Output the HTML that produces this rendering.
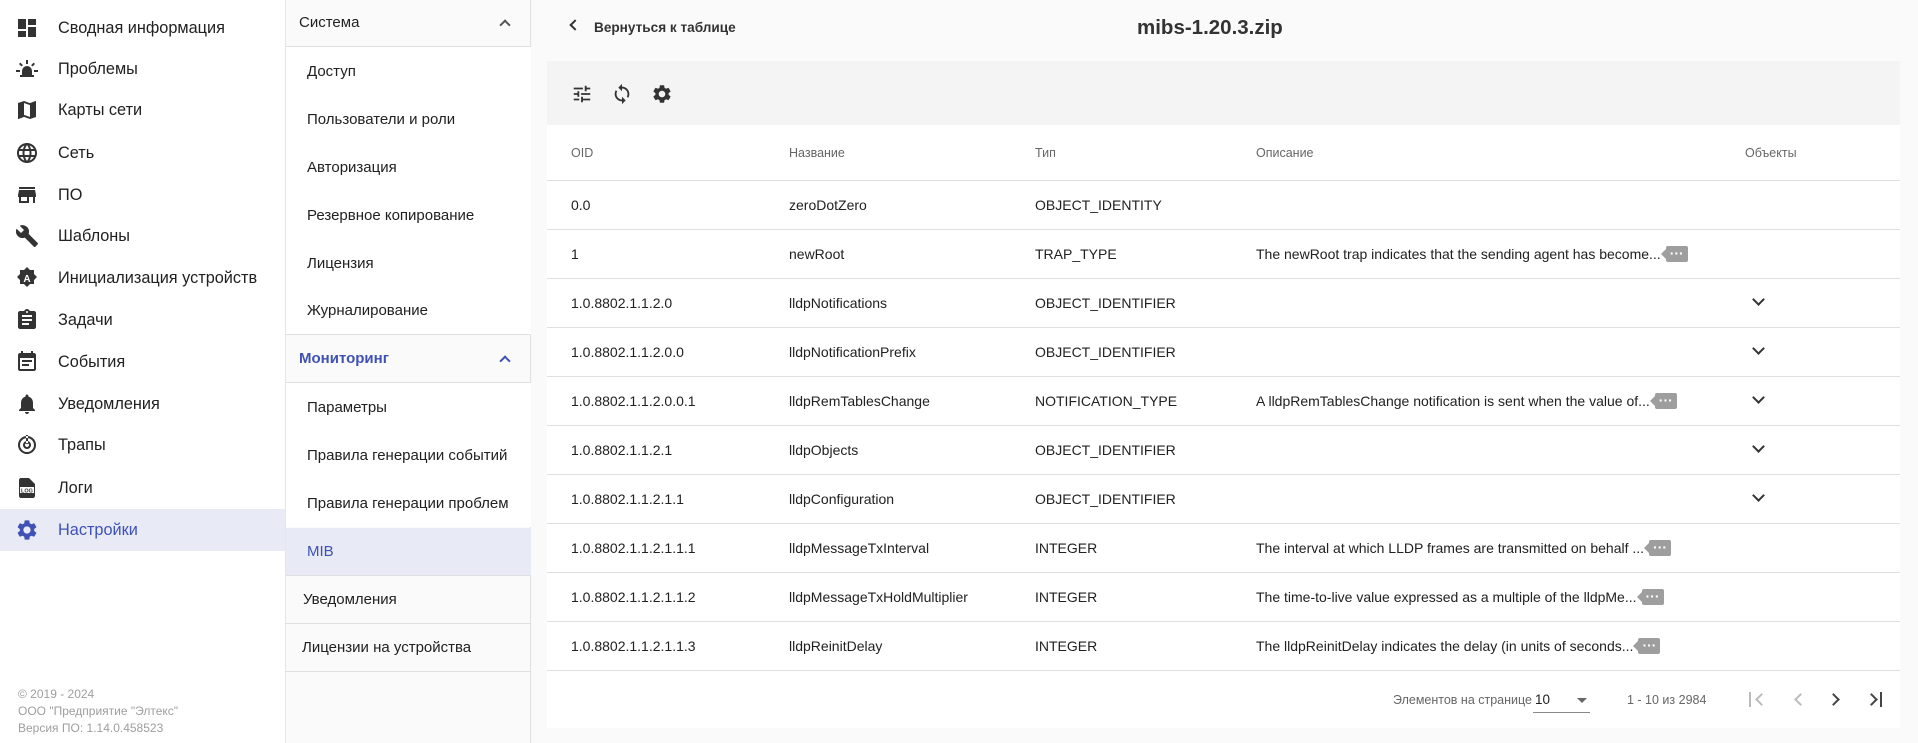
<!DOCTYPE html>
<html><head><meta charset="utf-8"><style>
*{margin:0;padding:0;box-sizing:border-box}
body{width:1918px;height:743px;overflow:hidden;background:#fafafa;font-family:"Liberation Sans",sans-serif;color:#212121;position:relative}
.a{position:absolute;white-space:nowrap}
#side{position:absolute;left:0;top:0;width:285px;height:743px;background:#fff}
.ni{position:absolute;left:0;width:285px;height:42px;display:flex;align-items:center;font-size:16.3px;color:#212121}
.ni svg{position:absolute;left:15px;width:24px;height:24px;fill:#333}
.ni span{position:absolute;left:58px}
.ni.act{background:#e8eaf6;color:#3f51b5}
.ni.act svg{fill:#3f51b5}
.foot{position:absolute;left:18px;font-size:12px;color:#9e9e9e}
#sub{position:absolute;left:285px;top:0;width:246px;height:743px;background:#fafafa;border-left:1px solid #e6e6e6;border-right:1px solid #e0e0e0}
.sh{position:absolute;left:0;width:245px;height:48px;border-bottom:1px solid #e0e0e0;font-size:15px;display:flex;align-items:center;padding-left:13px}
.sh .ch{position:absolute;right:22px;top:50%;width:8px;height:8px;border-left:2px solid #555;border-top:2px solid #555;transform:translateY(-25%) rotate(45deg)}
.si{position:absolute;left:0;width:245px;height:48px;background:#fff;font-size:15px;display:flex;align-items:center;padding-left:21px}
#card{position:absolute;left:547px;top:61px;width:1353px;height:667px;background:#fff}
#tb{position:absolute;left:0;top:0;width:1353px;height:64px;background:#f4f4f4}
#tb svg{position:absolute;top:22px;width:22px;height:22px;fill:#333}
.row{position:absolute;left:0;width:1353px;height:49px;border-bottom:1px solid #e0e0e0;font-size:14px}
.row div{position:absolute;top:0;line-height:48px;white-space:nowrap}
.hd{font-size:12.5px;color:#666}
.c1{left:24px}.c2{left:242px}.c3{left:488px}.c4{left:709px}.c5{left:1198px}
.bd{display:inline-block;position:relative;width:22px;height:16px;background:#9e9e9e;border-radius:2px;vertical-align:middle;margin-left:5px;top:-1px}
.bd:before{content:"";position:absolute;left:-5px;top:3px;border-right:5px solid #9e9e9e;border-top:5px solid transparent;border-bottom:5px solid transparent}
.bd:after{content:"···";position:absolute;left:0;width:22px;top:-17px;color:#fff;font-size:14px;font-weight:bold;text-align:center}
.dn{position:absolute;left:1207px;top:16px;width:9px;height:9px;border-right:2px solid #333;border-bottom:2px solid #333;transform:rotate(45deg)}
</style></head><body>
<div id="side">
<div class="ni" style="top:7px"><svg viewBox="0 0 24 24"><path d="M3 13h8V3H3v10zm0 8h8v-6H3v6zm10 0h8V11h-8v10zm0-18v6h8V3h-8z"/></svg><span>Сводная информация</span></div>
<div class="ni" style="top:48px"><svg viewBox="0 0 24 24"><path d="M7 18v-4a5 5 0 0 1 10 0v4h2v2H5v-2zM11 3h2v4h-2zM4 7l1.4-1.4 2.5 2.5-1.4 1.4zM20 7l-1.4-1.4-2.5 2.5 1.4 1.4zM1 13h4v2H1zM19 13h4v2h-4z"/></svg><span>Проблемы</span></div>
<div class="ni" style="top:89px"><svg viewBox="0 0 24 24"><path d="M20.5 3l-.16.03L15 5.1 9 3 3.36 4.9c-.21.07-.36.25-.36.48V20.5c0 .28.22.5.5.5l.16-.03L9 18.9l6 2.1 5.64-1.9c.21-.07.36-.25.36-.48V3.5c0-.28-.22-.5-.5-.5zM15 19l-6-2.11V5l6 2.11V19z"/></svg><span>Карты сети</span></div>
<div class="ni" style="top:132px"><svg viewBox="0 0 24 24"><path d="M11.99 2C6.47 2 2 6.48 2 12s4.47 10 9.99 10C17.52 22 22 17.52 22 12S17.52 2 11.99 2zm6.93 6h-2.95c-.32-1.25-.78-2.45-1.380-3.56 1.84.63 3.37 1.91 4.33 3.56zM12 4.04c.83 1.2 1.48 2.53 1.91 3.960h-3.82c.43-1.43 1.08-2.76 1.91-3.96zM4.26 14C4.1 13.36 4 12.69 4 12s.1-1.36.26-2h3.38c-.08.66-.14 1.32-.14 2 0 .68.06 1.34.14 2H4.26zm.82 2h2.95c.32 1.25.78 2.45 1.38 3.56-1.84-.63-3.37-1.9-4.33-3.56zm2.95-8H5.08c.96-1.66 2.49-2.93 4.330-3.56C8.81 5.55 8.35 6.75 8.03 8zM12 19.96c-.83-1.2-1.48-2.53-1.91-3.96h3.82c-.43 1.43-1.08 2.76-1.91 3.96zM14.34 14H9.66c-.09-.66-.16-1.32-.16-2 0-.68.07-1.35.16-2h4.68c.09.65.16 1.32.16 2 0 .68-.07 1.34-.16 2zm.25 5.56c.6-1.11 1.06-2.31 1.38-3.56h2.95c-.96 1.65-2.49 2.93-4.33 3.56zM16.36 14c.08-.66.14-1.32.14-2 0-.68-.06-1.34-.14-2h3.38c.16.64.26 1.31.26 2s-.1 1.36-.26 2h-3.38z"/></svg><span>Сеть</span></div>
<div class="ni" style="top:174px"><svg viewBox="0 0 24 24"><path d="M20 4H4v2h16V4zm1 10v-2l-1-5H4l-1 5v2h1v6h10v-6h4v6h2v-6h1zm-9 4H6v-4h6v4z"/></svg><span>ПО</span></div>
<div class="ni" style="top:215px"><svg viewBox="0 0 24 24"><path d="M22.7 19l-9.1-9.1c.9-2.3.4-5-1.5-6.9-2-2-5-2.4-7.4-1.3L9 6 6 9 1.6 4.7C.4 7.1.9 10.1 2.9 12.1c1.9 1.9 4.6 2.4 6.9 1.5l9.1 9.1c.4.4 1 .4 1.4 0l2.3-2.3c.5-.4.5-1.1.1-1.4z"/></svg><span>Шаблоны</span></div>
<div class="ni" style="top:257px"><svg viewBox="0 0 24 24"><path d="M12 1l3 3h4v4l3 3-3 3v4h-4l-3 3-3-3H5v-4l-3-3 3-3V4h4z"/><text x="12" y="16" font-size="10" font-weight="bold" text-anchor="middle" fill="#fff" font-family="Liberation Sans">A</text></svg><span>Инициализация устройств</span></div>
<div class="ni" style="top:299px"><svg viewBox="0 0 24 24"><path d="M19 3h-4.18C14.4 1.84 13.3 1 12 1c-1.3 0-2.4.84-2.82 2H5c-1.1 0-2 .9-2 2v14c0 1.1.9 2 2 2h14c1.1 0 2-.9 2-2V5c0-1.1-.9-2-2-2zm-7 0c.55 0 1 .45 1 1s-.45 1-1 1-1-.45-1-1 .45-1 1-1zm2 14H7v-2h7v2zm3-4H7v-2h10v2zm0-4H7V7h10v2z"/></svg><span>Задачи</span></div>
<div class="ni" style="top:341px"><svg viewBox="0 0 24 24"><path d="M17 10H7v2h10v-2zm2-7h-1V1h-2v2H8V1H6v2H5c-1.11 0-1.99.9-1.99 2L3 19c0 1.1.89 2 2 2h14c1.1 0 2-.9 2-2V5c0-1.1-.9-2-2-2zm0 16H5V8h14v11zm-5-5H7v2h7v-2z"/></svg><span>События</span></div>
<div class="ni" style="top:383px"><svg viewBox="0 0 24 24"><path d="M12 22c1.1 0 2-.9 2-2h-4c0 1.1.89 2 2 2zm6-6v-5c0-3.07-1.64-5.64-4.5-6.32V4c0-.83-.67-1.5-1.5-1.5s-1.5.67-1.5 1.5v.68C7.63 5.36 6 7.92 6 11v5l-2 2v1h16v-1l-2-2z"/></svg><span>Уведомления</span></div>
<div class="ni" style="top:424px"><svg viewBox="0 0 24 24"><path d="M12 3a9 9 0 1 0 .01 0zM12 5a7 7 0 1 1-.01 0zM12 8a4 4 0 1 0 .01 0zM12 10a2 2 0 1 1-.01 0zM11 2h2v9h-2z"/></svg><span>Трапы</span></div>
<div class="ni" style="top:467px"><svg viewBox="0 0 24 24"><path d="M6 2h8l6 6v12c0 1.1-.9 2-2 2H6c-1.1 0-2-.9-2-2V4c0-1.1.9-2 2-2z"/><rect x="5" y="11" width="14" height="6" fill="#fff"/><text x="12" y="16.3" font-size="5.5" font-weight="bold" text-anchor="middle" fill="#333" font-family="Liberation Sans">LOG</text></svg><span>Логи</span></div>
<div class="ni act" style="top:509px"><svg viewBox="0 0 24 24"><path d="M19.14 12.94c.04-.3.06-.61.06-.94 0-.32-.02-.64-.07-.94l2.03-1.58c.18-.14.23-.41.12-.61l-1.92-3.32c-.12-.22-.37-.29-.59-.22l-2.39.96c-.5-.38-1.03-.7-1.62-.94l-.36-2.54c-.04-.24-.24-.41-.48-.41h-3.84c-.24 0-.43.17-.47.41l-.36 2.54c-.59.24-1.13.57-1.62.94l-2.39-.96c-.22-.08-.47 0-.59.22L2.74 8.87c-.12.21-.08.47.12.61l2.03 1.58c-.05.3-.09.63-.09.94s.02.64.07.94l-2.03 1.58c-.18.14-.23.41-.12.61l1.92 3.32c.12.22.37.29.59.22l2.39-.96c.5.38 1.03.7 1.62.94l.36 2.54c.05.24.24.41.48.41h3.84c.24 0 .44-.17.47-.41l.36-2.54c.59-.24 1.13-.56 1.62-.94l2.39.96c.22.08.47 0 .59-.22l1.92-3.32c.12-.22.07-.47-.12-.61l-2.01-1.58zM12 15.6c-1.98 0-3.6-1.62-3.6-3.6s1.62-3.6 3.6-3.6 3.6 1.62 3.6 3.6-1.62 3.6-3.6 3.6z"/></svg><span>Настройки</span></div>
<div class="foot" style="top:687px">© 2019 - 2024</div>
<div class="foot" style="top:704px">ООО "Предприятие "Элтекс"</div>
<div class="foot" style="top:721px">Версия ПО: 1.14.0.458523</div>
</div>
<div id="sub">
<div class="sh" style="top:-1px;height:48px">Система<i class="ch"></i></div>
<div class="si" style="top:47px">Доступ</div>
<div class="si" style="top:95px">Пользователи и роли</div>
<div class="si" style="top:143px">Авторизация</div>
<div class="si" style="top:191px">Резервное копирование</div>
<div class="si" style="top:239px">Лицензия</div>
<div class="si" style="top:287px;height:48px;border-bottom:1px solid #e0e0e0">Журналирование</div>
<div class="sh" style="top:335px;color:#3f51b5;font-weight:bold">Мониторинг<i class="ch" style="border-color:#3f51b5"></i></div>
<div class="si" style="top:383px">Параметры</div>
<div class="si" style="top:431px">Правила генерации событий</div>
<div class="si" style="top:479px">Правила генерации проблем</div>
<div class="si" style="top:528px;background:#e8eaf6;color:#3f51b5;border-bottom:1px solid #e0e0e0">MIB</div>
<div class="sh" style="top:576px;padding-left:17px">Уведомления</div>
<div class="sh" style="top:624px;padding-left:16px">Лицензии на устройства</div>
</div>
<div class="a" style="left:571px;top:21px;width:8px;height:8px;border-left:2px solid #333;border-bottom:2px solid #333;transform:rotate(45deg)"></div>
<div class="a" style="left:594px;top:20px;font-size:13.6px;font-weight:bold;color:#333">Вернуться к таблице</div>
<div class="a" style="left:1137px;top:16px;font-size:20.5px;font-weight:bold;color:#333">mibs-1.20.3.zip</div>
<div id="card">
<div id="tb">
<svg style="left:24px" viewBox="0 0 24 24"><path d="M3 17v2h6v-2H3zM3 5v2h10V5H3zm10 16v-2h8v-2h-8v-2h-2v6h2zM7 9v2H3v2h4v2h2V9H7zm14 4v-2H11v2h10zm-6-4h2V7h4V5h-4V3h-2v6z"/></svg>
<svg style="left:64px" viewBox="0 0 24 24"><path d="M12 4V1L8 5l4 4V6c3.31 0 6 2.69 6 6 0 1.01-.25 1.97-.7 2.8l1.46 1.46C19.54 15.03 20 13.57 20 12c0-4.42-3.58-8-8-8zm0 14c-3.31 0-6-2.69-6-6 0-1.01.25-1.97.7-2.8L5.24 7.74C4.46 8.97 4 10.43 4 12c0 4.42 3.58 8 8 8v3l4-4-4-4v3z"/></svg>
<svg style="left:104px" viewBox="0 0 24 24"><path d="M19.14 12.94c.04-.3.06-.61.06-.94 0-.32-.02-.64-.07-.94l2.03-1.58c.18-.14.23-.41.12-.61l-1.92-3.32c-.12-.22-.37-.29-.59-.22l-2.39.96c-.5-.38-1.03-.7-1.62-.94l-.36-2.54c-.04-.24-.24-.41-.48-.41h-3.84c-.24 0-.43.17-.47.41l-.36 2.54c-.59.24-1.13.57-1.62.94l-2.39-.96c-.22-.08-.47 0-.59.22L2.74 8.87c-.12.21-.08.47.12.61l2.03 1.58c-.05.3-.09.63-.09.94s.02.64.07.94l-2.03 1.58c-.18.14-.23.41-.12.61l1.92 3.32c.12.22.37.29.59.22l2.39-.96c.5.38 1.03.7 1.62.94l.36 2.54c.05.24.24.41.48.41h3.84c.24 0 .44-.17.47-.41l.36-2.54c.59-.24 1.13-.56 1.62-.94l2.39.96c.22.08.47 0 .59-.22l1.92-3.32c.12-.22.07-.47-.12-.61l-2.01-1.58zM12 15.6c-1.98 0-3.6-1.62-3.6-3.6s1.62-3.6 3.6-3.6 3.6 1.62 3.6 3.6-1.62 3.6-3.6 3.6z"/></svg>
</div>
<div class="row hd" style="top:64px;height:56px"><div class="c1" style="line-height:56px">OID</div><div class="c2" style="line-height:56px">Название</div><div class="c3" style="line-height:56px">Тип</div><div class="c4" style="line-height:56px">Описание</div><div class="c5" style="line-height:56px">Объекты</div></div>
<div class="row" style="top:120px"><div class="c1">0.0</div><div class="c2">zeroDotZero</div><div class="c3">OBJECT_IDENTITY</div></div>
<div class="row" style="top:169px"><div class="c1">1</div><div class="c2">newRoot</div><div class="c3">TRAP_TYPE</div><div class="c4">The newRoot trap indicates that the sending agent has become...<span class="bd"></span></div></div>
<div class="row" style="top:218px"><div class="c1">1.0.8802.1.1.2.0</div><div class="c2">lldpNotifications</div><div class="c3">OBJECT_IDENTIFIER</div><i class="dn"></i></div>
<div class="row" style="top:267px"><div class="c1">1.0.8802.1.1.2.0.0</div><div class="c2">lldpNotificationPrefix</div><div class="c3">OBJECT_IDENTIFIER</div><i class="dn"></i></div>
<div class="row" style="top:316px"><div class="c1">1.0.8802.1.1.2.0.0.1</div><div class="c2">lldpRemTablesChange</div><div class="c3">NOTIFICATION_TYPE</div><div class="c4">A lldpRemTablesChange notification is sent when the value of...<span class="bd"></span></div><i class="dn"></i></div>
<div class="row" style="top:365px"><div class="c1">1.0.8802.1.1.2.1</div><div class="c2">lldpObjects</div><div class="c3">OBJECT_IDENTIFIER</div><i class="dn"></i></div>
<div class="row" style="top:414px"><div class="c1">1.0.8802.1.1.2.1.1</div><div class="c2">lldpConfiguration</div><div class="c3">OBJECT_IDENTIFIER</div><i class="dn"></i></div>
<div class="row" style="top:463px"><div class="c1">1.0.8802.1.1.2.1.1.1</div><div class="c2">lldpMessageTxInterval</div><div class="c3">INTEGER</div><div class="c4">The interval at which LLDP frames are transmitted on behalf ...<span class="bd"></span></div></div>
<div class="row" style="top:512px"><div class="c1">1.0.8802.1.1.2.1.1.2</div><div class="c2">lldpMessageTxHoldMultiplier</div><div class="c3">INTEGER</div><div class="c4">The time-to-live value expressed as a multiple of the lldpMe...<span class="bd"></span></div></div>
<div class="row" style="top:561px"><div class="c1">1.0.8802.1.1.2.1.1.3</div><div class="c2">lldpReinitDelay</div><div class="c3">INTEGER</div><div class="c4">The lldpReinitDelay indicates the delay (in units of seconds...<span class="bd"></span></div></div>
<div class="a" style="left:846px;top:632px;font-size:12.5px;color:#666">Элементов на странице</div>
<div class="a" style="left:988px;top:631px;font-size:13.5px">10</div>
<div class="a" style="left:986px;top:651px;width:57px;height:1px;background:#888"></div>
<div class="a" style="left:1030px;top:637px;border-left:5px solid transparent;border-right:5px solid transparent;border-top:5px solid #666"></div>
<div class="a" style="left:1080px;top:632px;font-size:12.5px;color:#666">1 - 10 из 2984</div>
<div class="a" style="left:1202px;top:631px;width:2px;height:15px;background:#bbb"></div>
<div class="a" style="left:1210px;top:634px;width:9px;height:9px;border-left:2px solid #bbb;border-bottom:2px solid #bbb;transform:rotate(45deg)"></div>
<div class="a" style="left:1249px;top:634px;width:9px;height:9px;border-left:2px solid #bbb;border-bottom:2px solid #bbb;transform:rotate(45deg)"></div>
<div class="a" style="left:1282px;top:634px;width:9px;height:9px;border-right:2px solid #444;border-top:2px solid #444;transform:rotate(45deg)"></div>
<div class="a" style="left:1320px;top:634px;width:9px;height:9px;border-right:2px solid #444;border-top:2px solid #444;transform:rotate(45deg)"></div>
<div class="a" style="left:1333px;top:631px;width:2px;height:15px;background:#444"></div>
</div>
</body></html>
